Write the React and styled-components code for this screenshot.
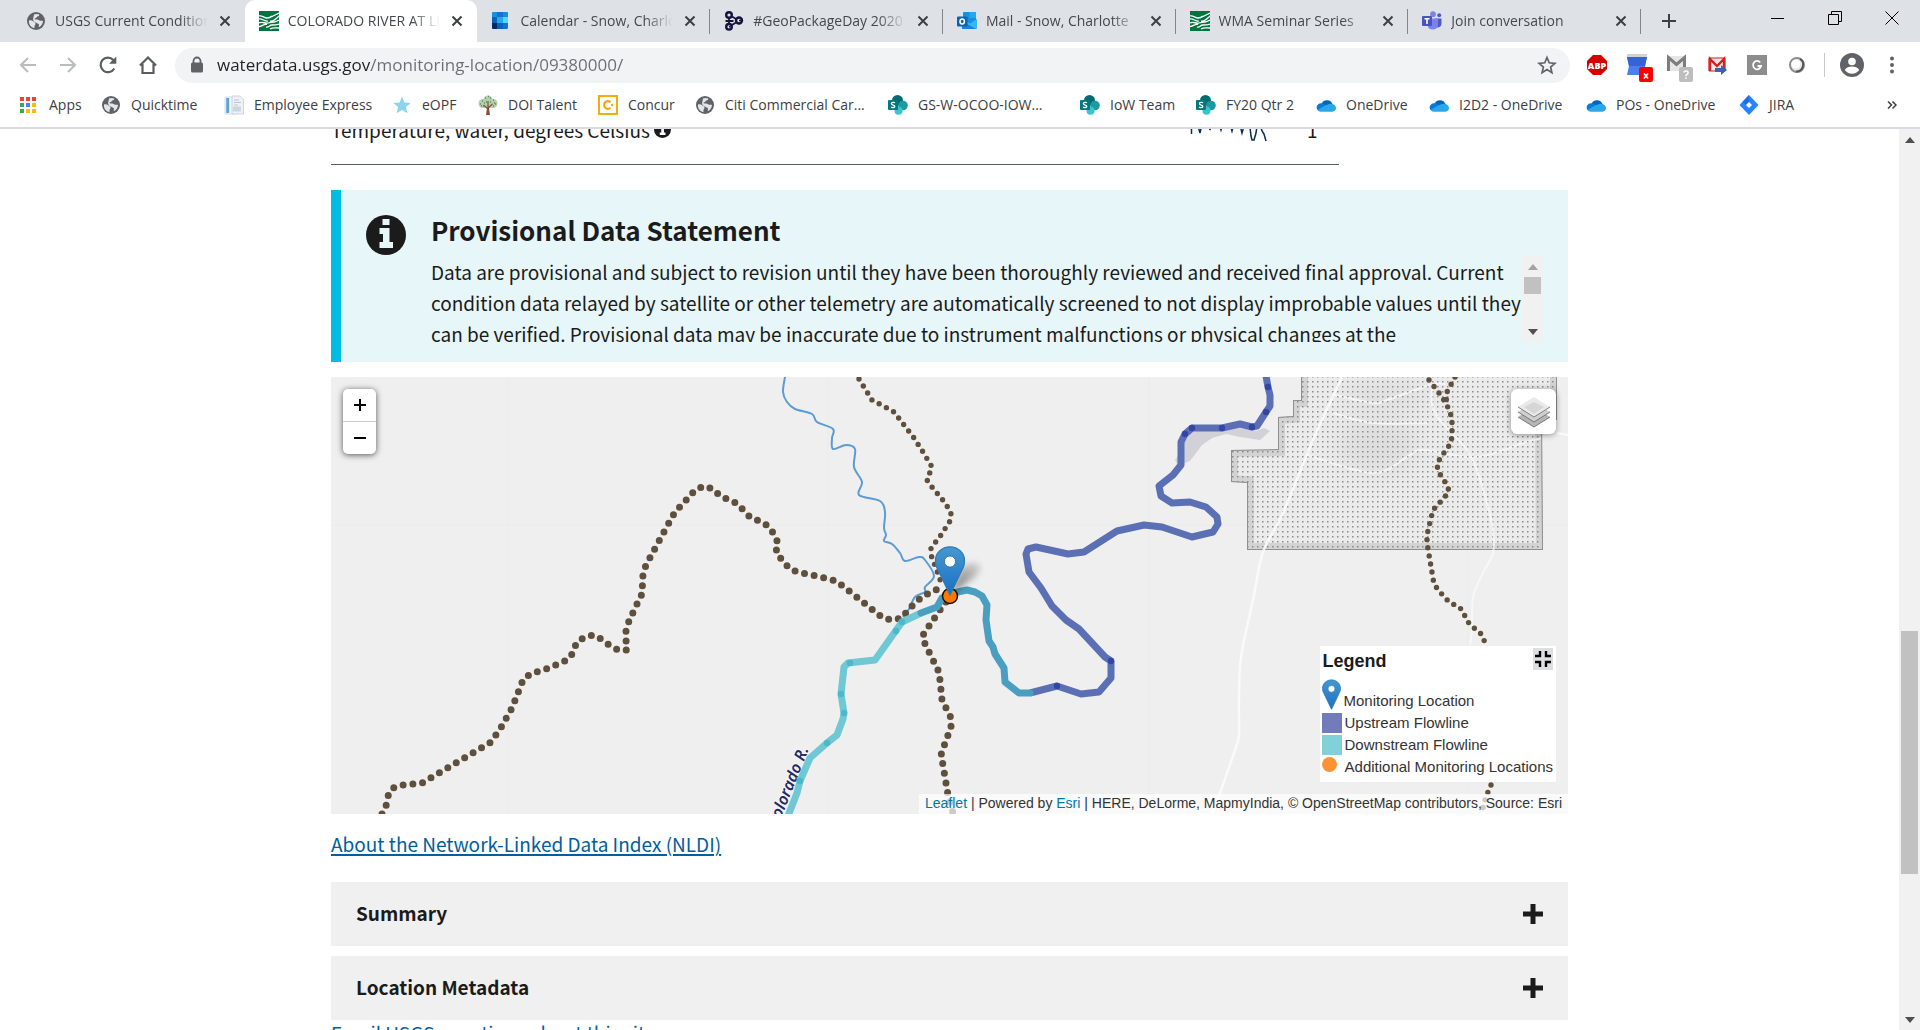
import React from "react";
import styled, { createGlobalStyle, css } from "styled-components";

const ui = `"Open Sans", "Noto Sans", sans-serif`;
const body = `"Noto Sans CJK SC", "Noto Sans", sans-serif`;
const arial = `"Liberation Sans", Arial, sans-serif`;

const Global = createGlobalStyle`
  *, *::before, *::after { box-sizing: border-box; }
  body { margin: 0; background: #fff; color: #1b1b1b; font-family: ${body}; }
  button { border: 0; padding: 0; background: none; font: inherit; color: inherit; cursor: pointer; }
  svg { display: block; flex: none; }
`;

const Window = styled.div`
  display: flex;
  flex-direction: column;
  height: 100vh;
  overflow: hidden;
`;

/* ---------- browser frame ---------- */

const TabStrip = styled.div`
  display: flex;
  height: 42px;
  flex: none;
  padding-left: 12px;
  background: #dee1e6;
  font-family: ${ui};
  font-size: 14px;
  color: #45494d;
`;

const Tabs = styled.div`
  display: flex;
  flex: 0 1 1629px;
  min-width: 0;
`;

const Tab = styled.div`
  position: relative;
  display: flex;
  flex: 1 1 0;
  min-width: 0;
  align-items: center;
  padding: 0 14px;
  ${(p) =>
    p.$active
      ? css`
          background: #fff;
          border-radius: 10px 10px 0 0;
        `
      : css`
          &::after {
            content: "";
            position: absolute;
            right: 0;
            top: 9px;
            height: 25px;
            width: 1px;
            background: ${p.$divider ? "#83878c" : "transparent"};
          }
        `}
`;

const TabTitle = styled.span`
  flex: 1;
  min-width: 0;
  margin: 0 11px 0 9px;
  overflow: hidden;
  white-space: nowrap;
  line-height: 24px;
  mask-image: linear-gradient(to right, #000 calc(100% - 28px), transparent);
`;

const IconButton = styled.button`
  display: flex;
  align-items: center;
  justify-content: center;
  width: ${(p) => p.$w || 40}px;
  height: ${(p) => p.$h || 35}px;
  flex: none;
`;

const WindowButtons = styled.div`
  display: flex;
  margin-left: auto;
`;

const Toolbar = styled.div`
  display: flex;
  align-items: center;
  flex: none;
  height: 44px;
  padding: 2px 8px 0 8px;
`;

const AddressBar = styled.label`
  display: flex;
  align-items: center;
  flex: 1;
  height: 35px;
  margin: 0 7px;
  padding: 0 3px 0 14px;
  gap: 12px;
  border-radius: 18px;
  background: #f1f3f4;
`;

const AddressInput = styled.input`
  flex: 1;
  min-width: 0;
  border: 0;
  outline: 0;
  padding: 0 0 2px;
  height: 30px;
  font-family: ${ui};
  font-size: 17px;
  color: #202124;
  background: linear-gradient(to right, #202124 154px, #6a6e72 154px);
  background-clip: text;
  -webkit-text-fill-color: transparent;
`;

const ToolbarRule = styled.div`
  width: 1px;
  height: 24px;
  margin: 0 7px;
  background: #c8cacd;
`;

const Bookmarks = styled.nav`
  display: grid;
  grid-template-columns: 82px 123px 168px 86px 120px 97px 193px 192px 116px 120px 113px 157px 153px 60px 1fr;
  align-items: center;
  flex: none;
  height: 43px;
  padding: 0 8px 4px 19px;
  border-bottom: 2px solid #d9dbe0;
  font-family: ${ui};
  font-size: 14px;
`;

const Bookmark = styled.a`
  display: flex;
  align-items: center;
  gap: 10px;
  color: #3c4043;
  text-decoration: none;
  white-space: nowrap;
  line-height: 24px;
`;

const Overflow = styled(IconButton)`
  justify-self: end;
`;

/* ---------- scrollbars ---------- */

const Viewport = styled.div`
  display: flex;
  flex: 1;
  min-height: 0;
`;

const Track = styled.div`
  display: flex;
  flex-direction: column;
  align-items: center;
  flex: none;
  width: 21px;
  background: #f1f1f1;
`;

const Thumb = styled.div`
  width: 17px;
  flex: ${(p) => p.$size} 1 0;
  background: #c1c1c1;
`;

const Spacer = styled.div`
  flex: ${(p) => p.$size} 1 0;
`;

const Arrow = styled.button`
  display: flex;
  align-items: center;
  justify-content: center;
  width: 21px;
  height: 21px;
  flex: none;
  color: ${(p) => (p.$dim ? "#a3a3a3" : "#505050")};
`;

/* ---------- page ---------- */

const Scroller = styled.div`
  flex: 1;
  min-width: 0;
  overflow: hidden;
`;

const Page = styled.main`
  max-width: 1237px;
  margin: -15px auto 0;
  font-size: 19px;
  line-height: 31px;
`;

const SeriesTable = styled.table`
  width: 1008px;
  max-width: 100%;
  table-layout: fixed;
  border-spacing: 0;
  border-bottom: 1px solid #565c65;
`;

const Cell = styled.td`
  width: ${(p) => p.$w};
  padding: 0 0 19px;
  vertical-align: top;
`;

const Inline = styled.span`
  display: flex;
  align-items: center;
  gap: 4px;
`;

const Alert = styled.section`
  display: flex;
  gap: 25px;
  margin: 25px 0 15px;
  padding: 25px 25px 20px;
  border-left: 10px solid #00bde3;
  background: #e7f6f8;
`;

const AlertBody = styled.div`
  flex: 1;
  min-width: 0;
`;

const AlertTitle = styled.h2`
  margin: 0 0 11px;
  font-size: 26px;
  font-weight: 700;
  line-height: 30px;
`;

const AlertScroll = styled.div`
  display: flex;
  height: 86px;
`;

const AlertText = styled.p`
  flex: 1;
  min-width: 0;
  margin: 0;
  height: 86px;
  overflow: hidden;
`;

const Map = styled.div`
  position: relative;
  height: 437px;
  overflow: hidden;
  background: #efefef;
  font-family: ${arial};
  font-size: 15px;
  line-height: 22px;
  color: #333;
`;

const MapDrawing = styled.svg`
  width: 100%;
  height: 100%;
`;

const ZoomControl = styled.div`
  position: absolute;
  left: 12px;
  top: 12px;
  width: 33px;
  border-radius: 5px;
  background: #fff;
  box-shadow: 0 1px 6px rgba(0, 0, 0, 0.65);
`;

const ZoomButton = styled.button`
  display: flex;
  align-items: center;
  justify-content: center;
  width: 33px;
  height: 32px;
  color: #000;
  & + & {
    height: 33px;
    border-top: 1px solid #ccc;
  }
`;

const LayersButton = styled.button`
  position: absolute;
  right: 12px;
  top: 12px;
  display: flex;
  align-items: center;
  justify-content: center;
  width: 45px;
  height: 45px;
  border-radius: 6px;
  background: #fff;
  box-shadow: 0 1px 6px rgba(0, 0, 0, 0.4);
`;

const Legend = styled.div`
  position: absolute;
  right: 12px;
  bottom: 32px;
  padding: 2px 3px 4px 2px;
  background: #fff;
`;

const LegendHead = styled.div`
  display: flex;
  justify-content: space-between;
  align-items: flex-start;
  height: 30px;
  padding-left: 1px;
`;

const LegendTitle = styled.h3`
  margin: 0;
  font-size: 18px;
  line-height: 26px;
  color: #1b1b1b;
`;

const Collapse = styled.button`
  display: flex;
  align-items: center;
  justify-content: center;
  width: 20px;
  height: 22px;
  background: #dcdee0;
`;

const LegendList = styled.ul`
  list-style: none;
  margin: 0;
  padding: 0;
`;

const LegendItem = styled.li`
  display: flex;
  align-items: flex-end;
  gap: 3px;
  min-height: 22px;
`;

const Swatch = styled.span`
  flex: none;
  width: 20px;
  height: 20px;
  margin-bottom: 1px;
  background: ${(p) => p.$color};
`;

const DotCell = styled.span`
  flex: none;
  width: 20px;
  height: 22px;
  padding-top: 1px;
`;

const Dot = styled.span`
  display: block;
  width: 15px;
  height: 15px;
  border-radius: 50%;
  background: #ff9233;
`;

const Attribution = styled.div`
  position: absolute;
  right: 0;
  bottom: 0;
  padding: 0 6px 2px;
  background: rgba(255, 255, 255, 0.7);
  font-size: 14px;
  line-height: 18px;
  white-space: nowrap;
  a {
    color: #0078a8;
    text-decoration: none;
  }
`;

const TextLink = styled.a`
  color: #005ea2;
  text-decoration: underline;
  text-decoration-thickness: 2px;
  text-underline-offset: 2px;
`;

const Paragraph = styled.p`
  margin: 14px 0 23px;
`;

const AccordionButton = styled.button`
  display: flex;
  align-items: center;
  justify-content: space-between;
  width: 100%;
  height: 64px;
  margin-bottom: 10px;
  padding: 0 25px;
  background: #f0f0f0;
  font-weight: 700;
  color: #1b1b1b;
`;

const AccordionLabel = styled.span`
  padding-bottom: 3px;
`;

const Contact = styled.p`
  margin: -13px 0 0;
`;

/* ---------- icons ---------- */

const Svg = ({ s = 20, w, h, vb, children, ...rest }) => (
  <svg width={w || s} height={h || s} viewBox={vb || `0 0 ${w || s} ${h || s}`} fill="none" aria-hidden="true" {...rest}>
    {children}
  </svg>
);

const Globe = () => (
  <Svg>
    <circle cx="10" cy="10" r="9" fill="#5f6368" />
    <path d="M3 9.5c1.500-.5 3.200 0 4.500 1s2 1 2 2.200-1 1.300-1 2.600v1.700C5 16.500 2.500 13.500 3 9.500zM8 3.500c1-.6 3.600-.8 5.200 0 .4 1.200-.8 1.800-1.900 2.100-.6 1.500-1.600 1.500-2.700 1.900-.3 1.200 1.400 1 2.600 1 1.600 0 2 1.500 3.400 1.300.9-.1 1.600-.2 2.400.2-.1 2.800-1.800 5.400-4.300 6.300.3-1.200 0-1.900.4-2.800-.6-1.100-2-.9-2.800-1.800-1.600-.3-3.200-1.600-3.200-3.400 0-1.700 1-3.700.9-4.800z" fill="#e3e5e9" />
  </Svg>
);
const Usgs = () => (
  <Svg>
    <path fill="#00743f" d="M0 0h20v20H0z" />
    <path d="M0 5c3-1 5 2 8 2s4-1 5-2M12 6l8-4M11 10c3 1 6-2 9-5M0 8c3-1 6 3 9 2M0 12c3-2 6 1 9 0s4-1 6-1 3-1 5-2M0 15.500c3 0 5-3 8-2M7 16c3 1 3-2 6-2s5 0 7-1M11 18c3-2 6-1 9-1" stroke="#fff" strokeWidth="1.300" />
  </Svg>
);
const CalendarIcon = () => (
  <Svg>
    <rect x="1" y="1" width="16" height="17" rx="1.500" fill="#1a6fd0" />
    <path d="M1 2.500A1.500 1.500 0 0 1 2.500 1H6v5H1z" fill="#1490df" />
    <path d="M6 6h6v6H6z" fill="#28a8ea" />
    <path d="M12 6h5v6h-5z" fill="#50d9ff" />
    <path d="M12 1h3.500A1.500 1.500 0 0 1 17 2.500V6h-5z" fill="#1f87dc" />
    <path d="M1 12h5v6H2.500A1.500 1.500 0 0 1 1 16.500z" fill="#0a2767" />
    <path d="M6 12h6v6H6z" fill="#0f5fbf" />
    <path d="M1 6h5v6H1z" fill="#0364b8" />
  </Svg>
);
const Ogc = () => (
  <Svg>
    <g fill="#dfe2ea" stroke="#14143c" strokeWidth="2.400">
      <circle cx="5" cy="4" r="2.800" />
      <circle cx="15" cy="9.500" r="3" />
      <circle cx="5" cy="15.800" r="2.800" />
    </g>
    <path d="M1.500 10h8M5 7v5M8 5.500l4 2.500M8 14l4-2.500" stroke="#14143c" strokeWidth="1.800" />
    <path d="M15 9.500h2M5 15.800h1.500" stroke="#14143c" strokeWidth="1.500" />
  </Svg>
);
const Outlook = () => (
  <Svg>
    <rect x="6" y="1" width="13" height="12" rx="1" fill="#1490df" />
    <path d="M12.500 1H18a1 1 0 0 1 1 1v5h-6.500z" fill="#28a8ea" />
    <path d="M5 8l8 4.500L20 8v9a1 1 0 0 1-1 1H6a1 1 0 0 1-1-1z" fill="#35b8f1" />
    <path d="M5 10l14 8H6a1 1 0 0 1-1-1z" fill="#1784d8" />
    <rect x="0" y="5.500" width="10.500" height="10" rx="1" fill="#0a62b8" />
    <ellipse cx="5.200" cy="10.500" rx="2.200" ry="2.500" stroke="#fff" strokeWidth="1.500" />
  </Svg>
);
const Teams = () => (
  <Svg>
    <circle cx="11" cy="3.200" r="2.900" fill="#7b83eb" />
    <circle cx="17.200" cy="4.200" r="2" fill="#5059c9" />
    <path d="M13 7.500h6.500v5.500a3.500 3.500 0 0 1-6.500 1.800z" fill="#5059c9" />
    <path d="M5.500 7.500H16V14a5.300 5.300 0 0 1-10.500 0z" fill="#7b83eb" />
    <rect x="0" y="5" width="10" height="10" rx="1" fill="#4b53bc" />
    <path d="M2.500 7.700h5M5 7.700V13" stroke="#fff" strokeWidth="1.600" />
  </Svg>
);
const AppsIcon = () => (
  <Svg>
    {["#ea4335", "#ea4335", "#ea4335", "#34a853", "#4285f4", "#fbbc04", "#34a853", "#fbbc04", "#fbbc04"].map((c, i) => (
      <rect key={i} x={1 + (i % 3) * 6} y={2 + Math.floor(i / 3) * 6} width="4" height="4" fill={c} />
    ))}
  </Svg>
);
const Pages = () => (
  <Svg>
    <path d="M1 2h11v17H1z" fill="#f5f7fa" stroke="#ccd5df" strokeWidth=".8" />
    <path d="M2.200 3h3v15h-3z" fill="#5aa5d8" />
    <path d="M8 1h8l3.500 3.500V19H8z" fill="#eef1f6" stroke="#c3ccd8" strokeWidth=".8" />
    <path d="M10 5h5M10 7.500h7M10 10h4" stroke="#bcc6d4" />
    <path d="M9 11.500h8v5H9z" fill="#cdd5e2" />
  </Svg>
);
const StarBlue = () => (
  <Svg>
    <path d="M10 1.500l2.400 5.900 6.300.5-4.800 4.100 1.500 6.200L10 14.900l-5.400 3.300 1.500-6.200L1.300 7.900l6.300-.5z" fill="#8dd3ee" />
  </Svg>
);
const Tree = () => (
  <Svg>
    <g fill="#b5ceb0">
      <circle cx="10" cy="5" r="4.500" />
      <circle cx="5" cy="8.500" r="4.500" />
      <circle cx="15" cy="8.500" r="4.500" />
      <circle cx="10" cy="9" r="4.500" />
    </g>
    <path d="M10 20v-9M10 14L5.500 10M10 13l4.500-4M10 11V6" stroke="#8a4e33" strokeWidth="1.200" />
    <path d="M9 13h2l1 7H8z" fill="#8a4e33" />
    <path d="M4 6h1M7 3h1M12 3h1M15 5h1M2 9h1M17 9h1M8 7h1M12 7h1M5 11h1M15 11h1M10 1.500h1M3 11h1M16 8h1M6 8h1" stroke="#5b9456" strokeWidth="1.300" />
  </Svg>
);
const ConcurIcon = () => (
  <Svg>
    <rect x="1" y="1" width="18" height="18" fill="#fff" stroke="#f5ad0b" strokeWidth="2" />
    <path d="M12.500 7.200A3.800 3.800 0 1 0 12.500 12.800" stroke="#f5a900" strokeWidth="2.200" />
    <circle cx="14" cy="10" r="1.200" fill="#f5a900" />
  </Svg>
);
const SharePoint = () => (
  <Svg>
    <circle cx="9.500" cy="5.500" r="5.500" fill="#036c70" />
    <circle cx="15" cy="10.500" r="4.800" fill="#1a9ba1" />
    <circle cx="10.500" cy="15.800" r="4" fill="#37c6d0" />
    <rect x="0" y="5" width="10" height="10" rx="1" fill="#03787c" />
    <path d="M7 7.800c-1-.7-3.600-.6-3.600.8 0 1.700 3.400 1.200 3.400 2.800 0 1.400-2.700 1.500-3.700.6" stroke="#fff" strokeWidth="1.300" />
  </Svg>
);
const OneDrive = () => (
  <Svg>
    <path d="M5.500 8.500a6 6 0 0 1 11 .5L10 12z" fill="#0364b8" />
    <path d="M1.500 15A4.300 4.300 0 0 1 5 8.200c1.600-.2 3 .4 4.200 1.200l7 5.600z" fill="#0b78d4" />
    <path d="M9 10.500l4-1.600c3.500-1 7 1 7 4.200 0 2-1.500 3.600-3.600 3.600H4.600c-1.300 0-2.400-.6-3.100-1.600z" fill="#28a8ea" />
  </Svg>
);
const Jira = () => (
  <Svg>
    <path d="M10 0l9.500 10L10 20 .5 10z" fill="#2684ff" />
    <path d="M10 0v7l-3 3-3.400-3.300z" fill="#1a6ee8" />
    <path d="M10 7l3 3-3 3-3-3z" fill="#fff" />
  </Svg>
);

const Close = () => (
  <Svg s={12}>
    <path d="M1.500 1.500l9 9M10.500 1.500l-9 9" stroke="#3c4043" strokeWidth="2" />
  </Svg>
);

const Pin = ({ w, h, id }) => (
  <svg width={w} height={h} viewBox="0 0 31 51" aria-hidden="true">
    <defs>
      <linearGradient id={id} x1="0" y1="0" x2="0" y2="1">
        <stop offset="0" stopColor="#4698d0" />
        <stop offset="1" stopColor="#1a6fc4" />
      </linearGradient>
    </defs>
    <path d="M15.500.8C7.200.8.8 7.200.8 15c0 4 1.500 7 3.400 10.500L15.500 49l11.300-23.500C28.700 22 30.200 19 30.200 15 30.200 7.200 23.800.8 15.500.8z" fill={`url(#${id})`} stroke="#2f7cb5" strokeWidth="1.200" />
    <circle cx="15.500" cy="15.500" r="5.600" fill="#fff" stroke="#3279ad" strokeWidth="1" />
  </svg>
);

const InfoCircle = ({ s, hole }) => (
  <svg width={s} height={s} viewBox="0 0 40 40" aria-hidden="true">
    <circle cx="20" cy="20" r="20" fill="#1b1b1b" />
    <path d="M16.500 4h7v6h-7zM13.500 13h10v14h3.500v6H13.500v-6H17v-8h-3.500z" fill={hole} />
  </svg>
);

const Plus = () => (
  <Svg>
    <path d="M10 2.500v15M2.500 10h15" stroke="#1b1b1b" strokeWidth="5" strokeLinecap="square" />
  </Svg>
);

const UpArrow = () => (
  <Svg w={10} h={6}>
    <path d="M5 0l5 6H0z" fill="currentColor" />
  </Svg>
);
const DownArrow = () => (
  <Svg w={10} h={6}>
    <path d="M0 0h10L5 6z" fill="currentColor" />
  </Svg>
);

/* ---------- map data ---------- */

const longTrail = "382,814 386,806 388,796 393,788 402,785 422,783 491,742 502,726 512,708 523,680 530,674 549,668 567,660 573,653 576,644 583,638 593,635 601,639 609,645 618,650 627,650 626,640 626,630 629,621 638,602 642,594 643,574 646,565 665,530 675,512 689,497 695,490 704,486 713,489 720,496 738,504 744,511 751,518 760,521 768,526 774,534 778,543 776,552 782,560 789,568 797,572 817,576 836,581 844,587 883,618 893,620 902,618 908,610 915,603 922,597 931,592 940,588";
const northTrail = "859,379 872,400 887,408 894,412 914,438 923,452 932,467 927,480 932,487 942,499 947,506 951,513 950,521 941,535 931,548 931,555 934,563 937,571 940,579 941,586";
const southTrail = "946,602 940,610 929,626 923,635 925,644 938,670 940,680 942,700 951,718 951,727 944,746 941,755 943,765 948,795 953,813";
const eastTrail = "1429,380 1439,393 1446,403 1449,410 1452,418 1452,435 1451,443 1441,457 1437,464 1438,471 1447,485 1449,491 1444,498 1433,510 1427,535 1427,543 1434,584 1439,591 1450,603 1458,606 1463,611 1466,619 1471,626 1477,630 1483,636 1485,644";
const eastBranch = "1455,377 1447,392 1446,403";
const eastLower = "1491,785 1488,792 1485,800 1483,807 1485,814";
const creek = "785,377 783,392 787,402 795,409 812,414 817,422 833,429 832,438 833,449 846,445 855,449 854,467 862,482 859,495 880,501 885,512 884,528 886,535 884,541 892,544 900,553 905,561 919,557 925,560 934,576 925,587 925,592 915,597 909,609 903,617";
const shared = "1030,693 1019,693 1005,682 1004,668 995,654 993,647 989,641 986,620 987,605 982,596 975,592 967,590 953,593 942,598 937,607 921,613";
const downstream = "921,613 902,622 875,660 848,663 844,667 841,694 844,713 843,719 837,735 827,743 810,758 800,781 797,793 788,816";
const upstream = "1030,693 1057,686 1081,694 1099,692 1111,678 1111,661 1105,657 1079,629 1066,620 1052,606 1041,588 1029,572 1026,554 1028,549 1036,547 1068,554 1084,552 1117,531 1144,525 1162,527 1192,537 1213,532 1218,524 1217,517 1206,507 1190,502 1172,503 1161,496 1159,486 1173,475 1181,465 1181,442 1185,434 1192,428 1222,428 1240,424 1252,427 1257,426 1266,412 1270,406 1270,395 1268,387 1266,376";
const park = "1301,370 1301,400 1293,400 1293,416 1278,417 1278,449 1231,450 1231,482 1247,483 1247,550 1543,550 1542,420 1557,420 1557,370";
const lake = "1184,436 1182,450 1175,460 1178,466 1190,461 1202,445 1212,438 1226,434 1240,437 1260,440 1270,431 1264,428 1256,431 1240,428 1194,430";

const downNodes = [[902, 622], [896, 631], [850, 663], [841, 694], [844, 713], [827, 743], [800, 781]];
const upNodes = [[1057, 686], [1111, 661], [1185, 434], [1192, 428], [1222, 428], [1252, 427], [1266, 412], [1268, 387]];

/* Catmull-Rom curve through the listed points. */
function smooth(list) {
  const p = list.split(" ").map((s) => s.split(",").map(Number));
  let d = `M${p[0]}`;
  for (let i = 0; i < p.length - 1; i++) {
    const a = p[i - 1] || p[i];
    const b = p[i];
    const c = p[i + 1];
    const e = p[i + 2] || c;
    d += `C${b[0] + (c[0] - a[0]) / 6},${b[1] + (c[1] - a[1]) / 6} ${c[0] - (e[0] - b[0]) / 6},${c[1] - (e[1] - b[1]) / 6} ${c}`;
  }
  return d;
}

const MapPicture = () => (
  <MapDrawing viewBox="331 377 1237 437" preserveAspectRatio="xMidYMid slice" fill="none" role="img" aria-label="Map of the Colorado River near Lees Ferry">
    <defs>
      <pattern id="stipple" x="1301" y="380" width="5" height="5" patternUnits="userSpaceOnUse">
        <rect x="1" y="1" width="1.500" height="1.500" fill="#8b8b8b" />
      </pattern>
      <clipPath id="parkClip">
        <polygon points={park} />
      </clipPath>
      <filter id="soft" x="-50%" y="-50%" width="200%" height="200%">
        <feGaussianBlur stdDeviation="3" />
      </filter>
      <filter id="softer" x="-50%" y="-50%" width="200%" height="200%">
        <feGaussianBlur stdDeviation="12" />
      </filter>
      <linearGradient id="fade" x1="0" y1="1" x2="1" y2="0">
        <stop offset="0" stopColor="#000" stopOpacity=".7" />
        <stop offset="1" stopColor="#000" stopOpacity=".1" />
      </linearGradient>
    </defs>
    <path d="M508 377v437M828 377v437M1149 377v437M1468 377v437M331 525h1237" stroke="#ebebeb" />
    <polygon points={lake} fill="#d2d1d8" />
    <g clipPath="url(#parkClip)">
      <polygon points={park} fill="#ebebeb" />
      <ellipse cx="1378" cy="445" rx="40" ry="28" fill="#dedede" filter="url(#softer)" />
      <ellipse cx="1385" cy="395" rx="45" ry="14" fill="#dedede" filter="url(#softer)" />
      <polygon points={park} stroke="#d3d3d3" strokeWidth="14" />
      <g stroke="#f5f5f5" strokeWidth="2">
        <path d={smooth("1335,395 1373,403 1387,400 1430,385 1445,384")} />
        <path d={smooth("1307,455 1373,473 1407,457 1423,450 1477,457 1533,440 1568,435")} />
        <path d={smooth("1333,413 1373,423 1427,423")} />
      </g>
      <polygon points={park} fill="url(#stipple)" />
      <polygon points={park} stroke="#8f8f8f" strokeWidth="2" />
    </g>
    <g stroke="#fbfbfb" strokeWidth="2.500">
      <path d={smooth("1342,377 1313,440 1283,513 1263,552 1253,600 1241,657 1239,700 1239,733 1236,747 1220,793 1212,814")} opacity=".85" />
      <path d={smooth("1432,387 1435,413 1467,450 1478,473 1488,507 1493,530 1493,553 1483,573 1473,597 1472,630 1470,645")} strokeWidth="2" opacity=".7" />
      <path d="M1557 433l11 2" strokeWidth="2" />
    </g>
    <path d={smooth(creek)} stroke="#5a9bd8" strokeWidth="2" />
    <g stroke="#5f4f3d" strokeLinecap="round" strokeLinejoin="round">
      <polyline points={longTrail} strokeWidth="7" strokeDasharray="0 9.800" />
      <polyline points={northTrail} strokeWidth="5.400" strokeDasharray="0 8.200" />
      <polyline points={southTrail} strokeWidth="7" strokeDasharray="0 9.800" />
      <polyline points={eastTrail} strokeWidth="5.400" strokeDasharray="0 8.200" />
      <polyline points={eastBranch} strokeWidth="5.400" strokeDasharray="0 8.200" />
      <polyline points={eastLower} strokeWidth="5.400" strokeDasharray="0 8" />
    </g>
    <text
      x="809"
      y="749"
      transform="rotate(-68 809 749)"
      textAnchor="end"
      fontFamily="Noto Sans, sans-serif"
      fontSize="16"
      fontWeight="600"
      fontStyle="italic"
      fill="#1f2c69"
      stroke="#f6f6f6"
      strokeWidth="2"
      paintOrder="stroke"
    >
      Colorado R.
    </text>
    <g strokeWidth="7" strokeLinejoin="round">
      <polyline points={downstream} stroke="#6fc8d4" />
      <polyline points={upstream} stroke="#5b6fb5" />
      <polyline points={shared} stroke="#4a9fc1" strokeLinecap="round" />
    </g>
    {downNodes.map(([x, y]) => (
      <circle key={`${x}-${y}`} cx={x} cy={y} r="3.200" fill="#4bb9c9" />
    ))}
    {upNodes.map(([x, y]) => (
      <circle key={`${x}-${y}`} cx={x} cy={y} r="3.200" fill="#3446a3" />
    ))}
    <path d="M951 594l10-25c6-7 16-8 19-4s-3 12-11 16z" fill="url(#fade)" filter="url(#soft)" opacity=".8" />
    <circle cx="950" cy="596" r="7.500" fill="#ff7800" stroke="#111" strokeWidth="1.500" />
    <g transform="translate(934.500 546)">
      <Pin w={31} h={51} id="pinLarge" />
    </g>
  </MapDrawing>
);

/* ---------- content ---------- */

const tabs = [
  { title: "USGS Current Conditions", icon: <Globe /> },
  { title: "COLORADO RIVER AT LEES", icon: <Usgs />, active: true },
  { title: "Calendar - Snow, Charlotte", icon: <CalendarIcon />, divider: true },
  { title: "#GeoPackageDay 2020", icon: <Ogc />, divider: true },
  { title: "Mail - Snow, Charlotte", icon: <Outlook />, divider: true },
  { title: "WMA Seminar Series", icon: <Usgs />, divider: true },
  { title: "Join conversation", icon: <Teams />, divider: true },
];

const bookmarks = [
  ["Apps", <AppsIcon />],
  ["Quicktime", <Globe />],
  ["Employee Express", <Pages />],
  ["eOPF", <StarBlue />],
  ["DOI Talent", <Tree />],
  ["Concur", <ConcurIcon />],
  ["Citi Commercial Car...", <Globe />],
  ["GS-W-OCOO-IOW...", <SharePoint />],
  ["IoW Team", <SharePoint />],
  ["FY20 Qtr 2", <SharePoint />],
  ["OneDrive", <OneDrive />],
  ["I2D2 - OneDrive", <OneDrive />],
  ["POs - OneDrive", <OneDrive />],
  ["JIRA", <Jira />],
];

const extensions = [
  ["Adblock Plus", (
    <Svg s={26}>
      <path d="M9 3h8l6 6v8l-6 6H9l-6-6V9z" fill="#d40000" />
      <text x="13" y="16.500" textAnchor="middle" fontFamily="Open Sans, sans-serif" fontSize="9" fontWeight="800" fill="#fff">ABP</text>
    </Svg>
  )],
  ["Calendar", (
    <Svg w={32} h={36}>
      <path d="M6 7h20v4H6z" fill="#d2d2d2" />
      <path d="M6 10h20l-2 9 2 9H6l2-9z" fill="#4a80ee" />
      <path d="M6 10h20l-2 9H8z" fill="#3364d2" />
      <rect x="18" y="20" width="14" height="15" rx="2" fill="#f00" />
      <path d="M23 26.500l4 5M27 26.500l-4 5" stroke="#fff" strokeWidth="1.600" />
    </Svg>
  )],
  ["Mail checker", (
    <Svg w={32} h={36}>
      <path d="M6 9h19v15H6z" fill="#e6e6e6" />
      <path d="M7.500 24V10.500l8 7 8-7V24" stroke="#7d7d7d" strokeWidth="3" />
      <rect x="18" y="20" width="14" height="15" rx="2" fill="#bdbdbd" />
      <path d="M22.800 25.500c.5-2.200 4.400-2 4.300.3 0 1.700-2.200 1.600-2.200 3.400M24.900 30.500v1.600" stroke="#fff" strokeWidth="1.500" />
    </Svg>
  )],
  ["Send with mail", (
    <Svg s={20}>
      <path d="M2 3h16v13H2z" fill="#f7e9e9" stroke="#c51f1f" />
      <path d="M3 16V4l7 7 7-7v12" stroke="#d61f1f" strokeWidth="2.400" />
      <path d="M8 13h6v-3l6 5-6 5v-3H8z" fill="#3a62b5" />
    </Svg>
  )],
  ["Grammar", (
    <Svg s={20}>
      <path d="M0 0h20v20H0z" fill="#8c8c8c" />
      <path d="M13.200 7.500A4 4.200 0 1 0 14 11h-3.500" stroke="#fff" strokeWidth="1.800" />
    </Svg>
  )],
  ["Ring", (
    <Svg s={20}>
      <circle cx="10" cy="10" r="7" fill="#e8e8e8" stroke="#8c8c8c" strokeWidth="2" />
      <path d="M13 4a6.800 6.800 0 0 1-4 12.500" stroke="#555" strokeWidth="2" />
      <circle cx="8.800" cy="9" r="4.500" fill="#fff" />
    </Svg>
  )],
];

export default function App() {
  return (
    <Window>
      <Global />
      <TabStrip>
        <Tabs>
          {tabs.map((t) => (
            <Tab key={t.title} $active={t.active} $divider={t.divider}>
              {t.icon}
              <TabTitle>{t.title}</TabTitle>
              <IconButton $w={12} $h={20} aria-label={`Close ${t.title}`}>
                <Close />
              </IconButton>
            </Tab>
          ))}
        </Tabs>
        <IconButton $w={55} $h={42} aria-label="New tab">
          <Svg s={16}>
            <path d="M8 1v14M1 8h14" stroke="#3c4043" strokeWidth="2" />
          </Svg>
        </IconButton>
        <WindowButtons>
          <IconButton $w={57} aria-label="Minimize">
            <Svg s={14}>
              <path d="M0 7.500h13" stroke="#000" />
            </Svg>
          </IconButton>
          <IconButton $w={57} aria-label="Restore">
            <Svg s={14}>
              <path d="M.5 3.500h10v10H.5zM3.500 3V.500h10v10H11" stroke="#000" />
            </Svg>
          </IconButton>
          <IconButton $w={57} aria-label="Close window">
            <Svg s={14}>
              <path d="M.5.500l13 13M13.500.500l-13 13" stroke="#000" />
            </Svg>
          </IconButton>
        </WindowButtons>
      </TabStrip>

      <Toolbar>
        <IconButton aria-label="Back">
          <Svg>
            <path d="M18 10H3M10 3l-7 7 7 7" stroke="#babcbe" strokeWidth="2" />
          </Svg>
        </IconButton>
        <IconButton aria-label="Forward">
          <Svg>
            <path d="M2 10h15M10 3l7 7-7 7" stroke="#babcbe" strokeWidth="2" />
          </Svg>
        </IconButton>
        <IconButton aria-label="Reload">
          <Svg>
            <path d="M16.300 13.500A7.300 7.300 0 1 1 15.300 4.900" stroke="#5a5e62" strokeWidth="2.200" />
            <path d="M18.300 1.500v7.300H11z" fill="#5a5e62" />
          </Svg>
        </IconButton>
        <IconButton aria-label="Home">
          <Svg>
            <path d="M2 10.500L10 2.500l8 8M4.500 9v9h11V9" stroke="#5a5e62" strokeWidth="2.200" />
          </Svg>
        </IconButton>
        <AddressBar>
          <Svg w={16} h={18}>
            <path d="M4.500 7V5a3.500 3.500 0 0 1 7 0v2" stroke="#5f6368" strokeWidth="1.800" />
            <rect x="2" y="6.500" width="12" height="10" rx="1.500" fill="#5f6368" />
          </Svg>
          <AddressInput aria-label="Address" defaultValue="waterdata.usgs.gov/monitoring-location/09380000/" />
          <IconButton aria-label="Bookmark this page">
            <Svg>
              <path d="M10 2.500l2.200 5.300 5.700.5-4.300 3.700 1.300 5.600L10 14.600l-4.900 3 1.300-5.600-4.300-3.700 5.700-.5z" stroke="#5f6368" strokeWidth="1.700" />
            </Svg>
          </IconButton>
        </AddressBar>
        {extensions.map(([name, icon]) => (
          <IconButton key={name} aria-label={name}>
            {icon}
          </IconButton>
        ))}
        <ToolbarRule />
        <IconButton aria-label="Profile">
          <Svg s={24}>
            <circle cx="12" cy="12" r="12" fill="#5f6368" />
            <circle cx="12" cy="8.500" r="3.800" fill="#fff" />
            <path d="M4.800 17c1.400-2.500 4.300-3.400 7.200-3.400s5.800.9 7.200 3.400a8.800 8.800 0 0 1-14.400 0z" fill="#fff" />
          </Svg>
        </IconButton>
        <IconButton aria-label="Menu">
          <Svg>
            <circle cx="10" cy="3.500" r="2" fill="#5f6368" />
            <circle cx="10" cy="10" r="2" fill="#5f6368" />
            <circle cx="10" cy="16.500" r="2" fill="#5f6368" />
          </Svg>
        </IconButton>
      </Toolbar>

      <Bookmarks aria-label="Bookmarks">
        {bookmarks.map(([name, icon], i) => (
          <Bookmark key={i} href="#">
            {icon}
            {name}
          </Bookmark>
        ))}
        <Overflow aria-label="More bookmarks">
          <Svg s={10}>
            <path d="M1 1.500L4.500 5 1 8.500M5.500 1.500L9 5 5.500 8.500" stroke="#3c4043" strokeWidth="1.500" />
          </Svg>
        </Overflow>
      </Bookmarks>

      <Viewport>
        <Scroller>
          <Page>
            <SeriesTable>
              <tbody>
                <tr>
                  <Cell $w="859px">
                    <Inline>
                      Temperature, water, degrees Celsius
                      <InfoCircle s={17} hole="#fff" />
                    </Inline>
                  </Cell>
                  <Cell $w="117px">
                    <Svg w={78} h={31} role="img">
                      <path d="M1.500 20V5l4-2 4.500 16L13 5l4-2 3 13 3-11 4-2 4 13 3-11 4-2 4 14 3-12 3-2 4 16 4-14 3 0 2 17 1 4h2l2-7 2-14 4 12 2 3 2 7" stroke="#0b2c52" strokeWidth="1.500" />
                    </Svg>
                  </Cell>
                  <Cell>1</Cell>
                </tr>
              </tbody>
            </SeriesTable>

            <Alert>
              <InfoCircle s={40} hole="#e7f6f8" />
              <AlertBody>
                <AlertTitle>Provisional Data Statement</AlertTitle>
                <AlertScroll>
                  <AlertText>
                    Data are provisional and subject to revision until they have been thoroughly reviewed and received final approval. Current
                    condition data relayed by satellite or other telemetry are automatically screened to not display improbable values until they
                    can be verified. Provisional data may be inaccurate due to instrument malfunctions or physical changes at the
                  </AlertText>
                  <Track>
                    <Arrow $dim aria-label="Scroll statement up">
                      <UpArrow />
                    </Arrow>
                    <Thumb $size={17} />
                    <Spacer $size={26} />
                    <Arrow aria-label="Scroll statement down">
                      <DownArrow />
                    </Arrow>
                  </Track>
                </AlertScroll>
              </AlertBody>
            </Alert>

            <Map>
              <MapPicture />
              <ZoomControl>
                <ZoomButton aria-label="Zoom in">
                  <Svg s={14}>
                    <path d="M7 1v12M1 7h12" stroke="#000" strokeWidth="2" />
                  </Svg>
                </ZoomButton>
                <ZoomButton aria-label="Zoom out">
                  <Svg s={14}>
                    <path d="M1 7h12" stroke="#000" strokeWidth="2" />
                  </Svg>
                </ZoomButton>
              </ZoomControl>
              <LayersButton aria-label="Layers">
                <Svg w={34} h={32}>
                  <path d="M1 21l16-10 16 10-16 10z" fill="#b5b5b5" />
                  <path d="M1 21l16 10 16-10" stroke="#777" />
                  <path d="M1 16l16-10 16 10-16 10z" fill="#cfcfcf" />
                  <path d="M1 16l16 10 16-10" stroke="#777" />
                  <path d="M1 11L17 1l16 10-16 10z" fill="#e9e9e9" />
                  <path d="M7 11l10-5 10 5-10 7z" fill="#d6d6d6" />
                  <path d="M1 11l16 10 16-10" stroke="#808080" />
                </Svg>
              </LayersButton>
              <Legend>
                <LegendHead>
                  <LegendTitle>Legend</LegendTitle>
                  <Collapse aria-label="Collapse legend">
                    <Svg s={16}>
                      <path d="M0 5h5V0M11 0v5h5M0 11h5v5M11 16v-5h5" stroke="#000" strokeWidth="2.400" />
                    </Svg>
                  </Collapse>
                </LegendHead>
                <LegendList>
                  <LegendItem>
                    <Pin w={19} h={34} id="pinSmall" />
                    Monitoring Location
                  </LegendItem>
                  <LegendItem>
                    <Swatch $color="#727cba" />
                    Upstream Flowline
                  </LegendItem>
                  <LegendItem>
                    <Swatch $color="#84d0d8" />
                    Downstream Flowline
                  </LegendItem>
                  <LegendItem>
                    <DotCell>
                      <Dot />
                    </DotCell>
                    Additional Monitoring Locations
                  </LegendItem>
                </LegendList>
              </Legend>
              <Attribution>
                <a href="#">Leaflet</a> | Powered by <a href="#">Esri</a> | HERE, DeLorme, MapmyIndia, © OpenStreetMap contributors, Source: Esri
              </Attribution>
            </Map>

            <Paragraph>
              <TextLink href="#">About the Network-Linked Data Index (NLDI)</TextLink>
            </Paragraph>

            <AccordionButton aria-expanded="false">
              <AccordionLabel>Summary</AccordionLabel>
              <Plus />
            </AccordionButton>
            <AccordionButton aria-expanded="false">
              <AccordionLabel>Location Metadata</AccordionLabel>
              <Plus />
            </AccordionButton>
            <Contact>
              <TextLink href="#">Email USGS questions about this site</TextLink>
            </Contact>
          </Page>
        </Scroller>
        <Track>
          <Arrow aria-label="Scroll up">
            <UpArrow />
          </Arrow>
          <Spacer $size={481} />
          <Thumb $size={243} />
          <Spacer $size={135} />
          <Arrow aria-label="Scroll down">
            <DownArrow />
          </Arrow>
        </Track>
      </Viewport>
    </Window>
  );
}
